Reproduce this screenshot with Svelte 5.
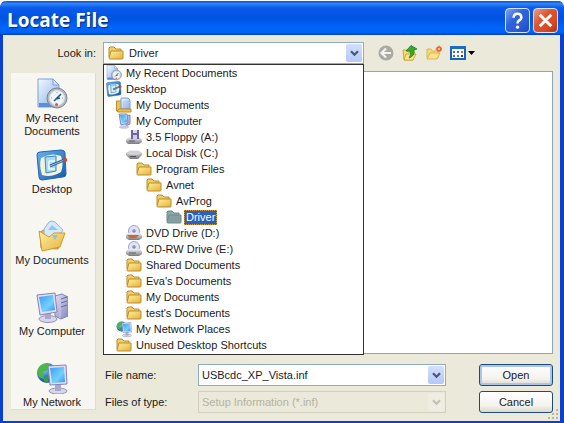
<script>
    let open = $state(true)
    let selected = $state(9)
    let fileName = $state('USBcdc_XP_Vista.inf')

    const places = [
        { icon: 'recent', label: 'My Recent Documents' },
        { icon: 'desktop', label: 'Desktop' },
        { icon: 'documents', label: 'My Documents' },
        { icon: 'computer', label: 'My Computer' },
        { icon: 'network', label: 'My Network' },
    ]

    const locations = [
        { icon: 'recent', label: 'My Recent Documents', depth: 0 },
        { icon: 'desktop', label: 'Desktop', depth: 0 },
        { icon: 'mydocs', label: 'My Documents', depth: 1 },
        { icon: 'pc', label: 'My Computer', depth: 1 },
        { icon: 'floppy', label: '3.5 Floppy (A:)', depth: 2 },
        { icon: 'disk', label: 'Local Disk (C:)', depth: 2 },
        { icon: 'folder', label: 'Program Files', depth: 3 },
        { icon: 'folder', label: 'Avnet', depth: 4 },
        { icon: 'folder', label: 'AvProg', depth: 5 },
        { icon: 'folder', label: 'Driver', depth: 6 },
        { icon: 'dvd', label: 'DVD Drive (D:)', depth: 2 },
        { icon: 'cdrw', label: 'CD-RW Drive (E:)', depth: 2 },
        { icon: 'folder', label: 'Shared Documents', depth: 2 },
        { icon: 'folder', label: "Eva's Documents", depth: 2 },
        { icon: 'folder', label: 'My Documents', depth: 2 },
        { icon: 'folder', label: "test's Documents", depth: 2 },
        { icon: 'network', label: 'My Network Places', depth: 1 },
        { icon: 'folder', label: 'Unused Desktop Shortcuts', depth: 1 },
    ]

    function iconFor(item, i) {
        return i === selected && item.icon === 'folder' ? 'folder-selected' : item.icon
    }

    function pick(i) {
        selected = i
        open = false
    }
</script>

{#snippet icon(name)}
    <svg class="icon" aria-hidden="true"><use href="#{name}" /></svg>
{/snippet}

{#snippet chevron()}
    <svg class="chevron" viewBox="0 0 9 7" aria-hidden="true">
        <path d="M1 1.2 L4.5 4.7 L8 1.2" fill="none" stroke="currentColor" stroke-width="2.3" />
    </svg>
{/snippet}

<svg class="defs" aria-hidden="true">
    <defs>
        <linearGradient id="g-folder" x1="0" y1="0" x2="1" y2="1">
            <stop offset="0" stop-color="#fff2a0" />
            <stop offset="1" stop-color="#e5b03a" />
        </linearGradient>
        <linearGradient id="g-page" x1="0" y1="0" x2="1" y2="1">
            <stop offset="0" stop-color="#f4f9ff" />
            <stop offset="1" stop-color="#83aee8" />
        </linearGradient>
        <linearGradient id="g-screen" x1="0" y1="0" x2="1" y2="1">
            <stop offset="0" stop-color="#3b9df0" />
            <stop offset="0.6" stop-color="#74d0ff" />
            <stop offset="1" stop-color="#3a8fe8" />
        </linearGradient>
        <linearGradient id="g-case" x1="0" y1="0" x2="1" y2="1">
            <stop offset="0" stop-color="#e4e4fa" />
            <stop offset="1" stop-color="#8583b8" />
        </linearGradient>
        <linearGradient id="g-metal" x1="0" y1="0" x2="0" y2="1">
            <stop offset="0" stop-color="#f4f4f6" />
            <stop offset="1" stop-color="#77777f" />
        </linearGradient>
        <linearGradient id="g-blue" x1="0" y1="0" x2="1" y2="1">
            <stop offset="0" stop-color="#63b5f3" />
            <stop offset="1" stop-color="#1457a8" />
        </linearGradient>
        <radialGradient id="g-globe" cx="0.35" cy="0.3" r="0.8">
            <stop offset="0" stop-color="#8ccfff" />
            <stop offset="0.5" stop-color="#2c79d8" />
            <stop offset="1" stop-color="#123e94" />
        </radialGradient>
    </defs>

    <symbol id="recent" viewBox="0 0 32 32">
        <path d="M2 1 H17 L23 7 V29 H2 Z" fill="url(#g-page)" stroke="#7f9fd8" />
        <path d="M17 1 V7 H23 Z" fill="#d5e6fc" stroke="#7f9fd8" />
        <path d="M3 25 H22 V29 H3 Z" fill="#5b8edd" />
        <circle cx="21" cy="20" r="10" fill="#b4b8bf" stroke="#7e828c" />
        <circle cx="21" cy="20" r="7.5" fill="#eef6fb" stroke="#d8dce2" />
        <path d="M21 14 V15 M15 20 H16 M26 20 H27" stroke="#7791a8" />
        <path d="M18 23 L25 16 M20 21 L24 20" stroke="#27598c" stroke-width="1.6" />
        <circle cx="20.500" cy="26.500" r="1.500" fill="#e8502c" />
    </symbol>

    <symbol id="desktop" viewBox="0 0 32 32">
        <path d="M1 6 Q1 3 4 3 L25 1 Q29 1 29 4 L30 25 Q30 28 27 28 L6 31 Q3 31 3 28 Z" fill="url(#g-blue)" stroke="#2c63ad" />
        <path d="M5 9 Q15 3 25 7 Q28 15 25 23 Q15 29 6 26 Q3 16 5 9 Z" fill="#f5f3d6" />
        <path d="M9 8 L20 7 V22 L10 24 Z" fill="#a9dafa" stroke="#3a86cb" />
        <path d="M13 12 H19 M13 12 V20 H19" fill="none" stroke="#f4fbff" stroke-width="1.500" />
        <path d="M14 17 L28 11" stroke="#24558f" stroke-width="2.800" />
        <path d="M14 17 L27 11.500" stroke="#9bcaf0" stroke-width="1" />
        <circle cx="29" cy="11" r="2.200" fill="#c84a35" />
    </symbol>

    <symbol id="documents" viewBox="0 0 32 32">
        <path d="M4 12 L10 9 L26 16 L22 29 L5 28 Z" fill="#e9bd4c" stroke="#bf9137" />
        <path d="M8 9 L13 2 Q16 0 19 2 L27 10 L19 22 L8 18 Z" fill="#d5e9fc" stroke="#8fb3df" />
        <path d="M12 10 L16 5 L22 10 Z" fill="#8ec7f0" />
        <path d="M3 11 L13 17 L18 13 L29 13 L24 27 L6 31 Z" fill="url(#g-folder)" stroke="#c79a38" />
        <path d="M16 15 L22 15 L19 20 Z" fill="#8ec0e9" />
    </symbol>

    <symbol id="computer" viewBox="0 0 32 32">
        <path d="M19 5 L26 3 L32 6 V25 L25 28 L19 25 Z" fill="url(#g-case)" stroke="#8583b5" />
        <path d="M25 8 L31 6 M25 12 L31 10 M25 16 L31 14" stroke="#6b69a3" />
        <path d="M24 5 V27" stroke="#c9c8ea" />
        <ellipse cx="12" cy="28" rx="9" ry="3.500" fill="#d8d7ea" stroke="#9492b5" />
        <path d="M9 22 H15 V28 H9 Z" fill="#aaa8cd" />
        <path d="M1 4 L19 2 L21 21 L4 24 Z" fill="#dedef4" stroke="#8583b5" />
        <path d="M3 6 L17 4 L19 19 L6 21 Z" fill="url(#g-screen)" />
    </symbol>

    <symbol id="network" viewBox="0 0 32 32">
        <circle cx="11" cy="11" r="10" fill="url(#g-globe)" />
        <path d="M3 5 Q8 0 14 2 L12 8 L7 10 L8 17 L3 15 Q0 10 3 5 Z" fill="#4cb648" />
        <path d="M8 15 L13 14 L12 21 L8 19 Z" fill="#3c9d3c" />
        <ellipse cx="22" cy="29" rx="9" ry="3" fill="#d8d7ea" stroke="#9492b5" />
        <path d="M19 22 H25 V29 H19 Z" fill="#aaa8cd" />
        <path d="M12 4 L30 3 L31 22 L14 23 Z" fill="#dedef4" stroke="#8583b5" />
        <path d="M14 6 L28 5 L29 20 L16 21 Z" fill="url(#g-screen)" />
    </symbol>

    <symbol id="folder" viewBox="0 0 16 16">
        <path d="M1 12 V3 L2 2 H6 L8 4 H13 V12 Z" fill="#f2ce60" stroke="#b98d2d" />
        <path d="M1 13 L3 6 H15 V13 Q15 14 14 14 H2 Q1 14 1 13 Z" fill="url(#g-folder)" stroke="#b98d2d" />
    </symbol>

    <symbol id="folder-selected" viewBox="0 0 16 16">
        <path d="M1 12 V3 L2 2 H6 L8 4 H13 V12 Z" fill="#8fa8a8" stroke="#6c8a92" />
        <path d="M1 13 L3 6 H15 V13 Q15 14 14 14 H2 Q1 14 1 13 Z" fill="#859f9f" stroke="#6c8a92" />
    </symbol>

    <symbol id="mydocs" viewBox="0 0 16 16">
        <path d="M0.500 4 H7 V14 H0.500 Z" fill="#f0c04c" stroke="#c18d25" />
        <path d="M5 1 H12 L14 3 V12 H5 Z" fill="url(#g-page)" stroke="#7d9fd6" />
        <path d="M7 5 H12 M7 7 H12 M7 9 H12" stroke="#a9c6ee" />
        <path d="M1 14 L3 12 H15 V15 H2 Z" fill="#efc14e" stroke="#b98d2d" />
    </symbol>

    <symbol id="pc" viewBox="0 0 16 16">
        <path d="M10 3 L14 2 V11 L10 13 Z" fill="#b6b5dc" stroke="#8583b5" />
        <ellipse cx="8" cy="14" rx="5" ry="1.800" fill="#c9c8df" />
        <path d="M3 1 H11 L12 10 L5 12 Z" fill="#cfd9f5" stroke="#7b89c4" />
        <path d="M4 2 H10 L11 9 L6 10 Z" fill="url(#g-screen)" />
    </symbol>

    <symbol id="floppy" viewBox="0 0 16 16">
        <path d="M0 11 L3 8 H14 L16 11 V13 L13 15 H2 L0 13 Z" fill="url(#g-metal)" />
        <path d="M5 1 H13 V10 H5 Z" fill="#6d63a9" />
        <path d="M7 1 H11 V4 H7 Z" fill="#dcdaf0" />
        <path d="M7 6 H11 V10 H7 Z" fill="#cfcde8" />
        <path d="M3 12 H9" stroke="#55555f" />
    </symbol>

    <symbol id="disk" viewBox="0 0 16 16">
        <path d="M0 8 L4 5 H12 L16 8 V10 L12 14 H4 L0 10 Z" fill="url(#g-metal)" />
        <path d="M1 8 L4 6 H12 L15 8 L12 10 H4 Z" fill="#d0d0d6" />
        <path d="M4 11.500 H10" stroke="#4f4f57" />
    </symbol>

    <symbol id="dvd" viewBox="0 0 16 16">
        <circle cx="8" cy="6" r="5.500" fill="#dfe2f4" stroke="#9ea2c6" />
        <circle cx="8" cy="6" r="1.800" fill="#8b8fba" />
        <path d="M0 10 L3 8 H13 L16 10 V13 L13 15 H3 L0 13 Z" fill="url(#g-metal)" />
        <path d="M1 10 H13 L10 13 H4 Z" fill="#d8632a" />
    </symbol>

    <symbol id="cdrw" viewBox="0 0 16 16">
        <circle cx="8" cy="6" r="5.500" fill="#e1e4f4" stroke="#9ea2c6" />
        <circle cx="8" cy="6" r="1.800" fill="#8b8fba" />
        <path d="M0 10 L3 8 H13 L16 10 V13 L13 15 H3 L0 13 Z" fill="url(#g-metal)" />
        <path d="M3 12 H10" stroke="#606068" />
    </symbol>

    <symbol id="back" viewBox="0 0 16 16">
        <circle cx="8" cy="8" r="7.500" fill="#aaaaa4" />
        <path d="M8 3.500 L3.500 8 L8 12.500 M4 8 H13" fill="none" stroke="#f4f3ec" stroke-width="2.200" />
    </symbol>

    <symbol id="up" viewBox="0 0 16 16">
        <path d="M1 5 H5 L6 7 H12 L11 15 H2 Z" fill="#f7dc74" stroke="#d2a63c" />
        <path d="M2 15 L4 9 H14 L11 15 Z" fill="#fbe98f" stroke="#d2a63c" />
        <path d="M4 6 L9 0.500 L15 4 L12 5 Q13 11 7 13 Q10 9 8 6 Z" fill="#3da72b" stroke="#1f7d1a" stroke-width="0.800" />
    </symbol>

    <symbol id="new-folder" viewBox="0 0 16 16">
        <path d="M1 4 H5 L6 6 H12 V13 H1 Z" fill="#f7da74" stroke="#ddb451" />
        <path d="M1 14 L4 8 H14 L11 14 Z" fill="#fde48a" stroke="#ddb451" />
        <path d="M13 0 V8 M9 4 H16" stroke="#f29a5e" stroke-width="0.800" />
        <circle cx="13" cy="4" r="2.800" fill="#f0642f" />
        <circle cx="13" cy="4" r="1" fill="#ffe1a0" />
    </symbol>

    <symbol id="views" viewBox="0 0 16 16">
        <rect x="1" y="2" width="14" height="12" fill="#fff" stroke="#1b63b8" stroke-width="2" />
        <path d="M0 1 H16 V4 H0 Z" fill="#1c6cc6" />
        <path d="M3 6 H5 V8 H3 Z M7 6 H9 V8 H7 Z M3 10 H5 V12 H3 Z" fill="#3c6fc4" />
        <path d="M11 6 H13 V8 H11 Z" fill="#d9603a" />
        <path d="M7 10 H9 V12 H7 Z" fill="#3fa34a" />
        <path d="M11 10 H13 V12 H11 Z" fill="#2b3f8c" />
    </symbol>
</svg>

<main class="dialog">
    <header>
        <h1>Locate File</h1>
        <button class="caption help" aria-label="Help">
            <svg viewBox="0 0 24 24" aria-hidden="true">
                <path d="M8 9 Q8 5 12 5 Q16 5 16 8.500 Q16 11 13.500 12 Q12 13 12 15" fill="none" stroke="#fff" stroke-width="2.600" />
                <circle cx="12" cy="19" r="1.700" fill="#fff" />
            </svg>
        </button>
        <button class="caption close" aria-label="Close">
            <svg viewBox="0 0 24 24" aria-hidden="true">
                <path d="M6 6 L18 18 M18 6 L6 18" stroke="#fff" stroke-width="3" />
            </svg>
        </button>
    </header>

    <div class="body">
        <label class="look-label" for="look">Look in:</label>
        <div class="look-row">
            <div class="look">
                <button
                    id="look"
                    class="field look-field"
                    role="combobox"
                    aria-controls="locations"
                    aria-expanded={open}
                    onclick={() => (open = !open)}
                >
                    {@render icon('folder')}
                    <span class="current">{locations[selected].label}</span>
                    <span class="arrow">{@render chevron()}</span>
                </button>
                {#if open}
                    <ul id="locations" role="listbox" aria-label="Look in">
                        {#each locations as item, i}
                            <li role="option" aria-selected={i === selected} style="--depth: {item.depth}">
                                <button tabindex="-1" onclick={() => pick(i)}>
                                    {@render icon(iconFor(item, i))}
                                    <span class:selected={i === selected}>{item.label}</span>
                                </button>
                            </li>
                        {/each}
                    </ul>
                {/if}
            </div>
            <div class="toolbar">
                <button aria-label="Back" disabled>{@render icon('back')}</button>
                <button aria-label="Up One Level">{@render icon('up')}</button>
                <button aria-label="Create New Folder">{@render icon('new-folder')}</button>
                <button aria-label="View Menu">
                    {@render icon('views')}
                    <svg class="drop" viewBox="0 0 7 4" aria-hidden="true"><path d="M0 0 H7 L3.500 4 Z" /></svg>
                </button>
            </div>
        </div>

        <nav aria-label="Places">
            {#each places as place}
                <button>
                    {@render icon(place.icon)}
                    <span>{place.label}</span>
                </button>
            {/each}
        </nav>

        <div class="content">
            <div class="files"></div>
            <form onsubmit={(e) => e.preventDefault()}>
                <label for="name">File name:</label>
                <div class="field">
                    <input id="name" type="text" bind:value={fileName} />
                    <button type="button" class="arrow" aria-label="Recent file names">{@render chevron()}</button>
                </div>
                <button class="push default" type="submit">Open</button>

                <label for="type">Files of type:</label>
                <div class="field disabled">
                    <select id="type" disabled>
                        <option>Setup Information (*.inf)</option>
                    </select>
                    <span class="arrow">{@render chevron()}</span>
                </div>
                <button class="push" type="button">Cancel</button>
            </form>
        </div>
    </div>

    <svg class="grip" viewBox="0 0 12 12" aria-hidden="true">
        <path d="M9 1h2v2h-2z M9 5h2v2h-2z M5 5h2v2h-2z M9 9h2v2h-2z M5 9h2v2h-2z M1 9h2v2h-2z" fill="#b9b5a2" />
    </svg>
</main>

<style>
    :global(body) {
        margin: 0;
        background: #fff;
    }

    .defs {
        position: absolute;
        width: 0;
        height: 0;
    }

    .dialog {
        position: relative;
        display: flex;
        flex-direction: column;
        box-sizing: border-box;
        min-height: 100vh;
        border: solid #0a3fd0;
        border-width: 1px 4px 3px 3px;
        border-top-color: #fff;
        border-radius: 8px 8px 0 0;
        background: #ebe9d9;
        color: #1a1a1a;
        font: 11px/13px "Liberation Sans", Arial, sans-serif;
    }

    button, input, select {
        margin: 0;
        padding: 0;
        border: 0;
        background: none;
        color: inherit;
        font: inherit;
    }

    .icon {
        flex: none;
        width: 16px;
        height: 16px;
    }

    header {
        display: flex;
        align-items: center;
        gap: 3px;
        height: 34px;
        margin: 0 -4px 0 -3px;
        padding: 4px 6px 0 7px;
        box-sizing: border-box;
        border-radius: 7px 7px 0 0;
        background: linear-gradient(#0a50d8, #2f86f7 8%, #0a5bea 20%, #0053e0 50%, #0065fb 78%, #0062f5 92%, #0040c4);
    }

    h1 {
        flex: 1;
        margin: 0;
        color: #fff;
        font: bold 19px/24px "Open Sans", "Noto Sans", sans-serif;
        text-shadow: 1px 1px 1px #06298a;
    }

    .caption {
        box-sizing: border-box;
        width: 25px;
        height: 25px;
        border: 1px solid #d6e2fb;
        border-radius: 4px;
    }

    .caption svg {
        display: block;
        width: 100%;
        height: 100%;
    }

    .help {
        background: linear-gradient(135deg, #7ea3f4, #2f62dd 40%, #2a5cd8 70%, #1c49b8);
    }

    .close {
        background: linear-gradient(135deg, #f09a80, #dd5530 40%, #d84a22 70%, #b03512);
    }

    .body {
        flex: 1;
        display: grid;
        grid-template-columns: 85px 1fr;
        grid-template-rows: 22px 1fr;
        gap: 7px;
        padding: 7px 7px 8px 8px;
    }

    .look-label {
        align-self: center;
        text-align: right;
    }

    .look-row {
        display: flex;
        align-items: center;
    }

    .look {
        position: relative;
        flex: 0 1 261px;
    }

    .field {
        display: flex;
        align-items: center;
        box-sizing: border-box;
        width: 100%;
        height: 22px;
        padding: 1px;
        border: 1px solid #8fabc6;
        background: #fff;
    }

    .look-field {
        padding-left: 4px;
        text-align: left;
    }

    .current {
        flex: 1;
        padding-left: 5px;
    }

    .arrow {
        display: flex;
        align-items: center;
        justify-content: center;
        flex: none;
        width: 16px;
        height: 100%;
        border-radius: 2px;
        background: linear-gradient(#d3dffd, #b5c8f7);
        color: #46597f;
    }

    .chevron {
        width: 9px;
        height: 7px;
    }

    ul {
        position: absolute;
        z-index: 1;
        top: 100%;
        left: 0;
        right: 0;
        margin: 0;
        padding: 0 0 1px;
        border: 1px solid #333;
        background: #fff;
        list-style: none;
    }

    li {
        height: 16px;
        padding-left: calc(2px + var(--depth) * 10px);
    }

    li button {
        display: flex;
        align-items: center;
        gap: 2px;
        height: 16px;
        white-space: nowrap;
    }

    li span {
        padding: 1px 2px;
    }

    .selected {
        outline: 1px dotted #d99a4a;
        outline-offset: -1px;
        background: #2b60bd;
        color: #fff;
    }

    .toolbar {
        display: flex;
        align-items: center;
        gap: 8px;
        padding-left: 14px;
    }

    .toolbar button {
        display: flex;
        align-items: center;
        gap: 2px;
    }

    .drop {
        width: 7px;
        height: 4px;
    }

    nav {
        display: flex;
        flex-direction: column;
        box-sizing: border-box;
        margin: 2px 0 3px;
        padding: 5px 2px 0 0;
        border: solid #dedbcb;
        border-width: 0 1px 1px 0;
        background: #f7f6f1;
    }

    nav button {
        display: flex;
        flex-direction: column;
        align-items: center;
        gap: 2px;
        min-height: 71px;
    }

    nav button:last-child {
        min-height: 0;
    }

    nav span {
        max-width: 64px;
    }

    nav button:nth-child(n + 2) span {
        max-width: none;
    }

    nav .icon {
        width: 32px;
        height: 32px;
    }

    .content {
        display: flex;
        flex-direction: column;
        gap: 10px;
    }

    .files {
        flex: 1;
        border: 1px solid #8fa5bd;
        background: #fff;
    }

    form {
        display: grid;
        grid-template-columns: 95px 1fr 74px;
        align-items: center;
        row-gap: 5px;
    }

    form label {
        padding-left: 2px;
    }

    form .field {
        width: auto;
        margin-right: 33px;
    }

    .field input, .field select {
        flex: 1;
        min-width: 0;
        padding-left: 2px;
        appearance: none;
        outline: none;
    }

    .disabled {
        border-color: #d2cfbf;
        background: #ebe9d9;
        color: #b5b2a2;
    }

    .disabled select {
        opacity: 1;
    }

    .disabled .arrow {
        background: #efede2;
        color: #c3c0b2;
    }

    .push {
        box-sizing: border-box;
        height: 22px;
        border: 1px solid #234a75;
        border-radius: 3px;
        background: linear-gradient(#fff, #f3f2ec 70%, #dcd8ca);
    }

    .default {
        box-shadow: inset 0 0 0 2px #a9c4ee;
    }

    .grip {
        position: absolute;
        right: 1px;
        bottom: 1px;
        width: 12px;
        height: 12px;
    }
</style>
